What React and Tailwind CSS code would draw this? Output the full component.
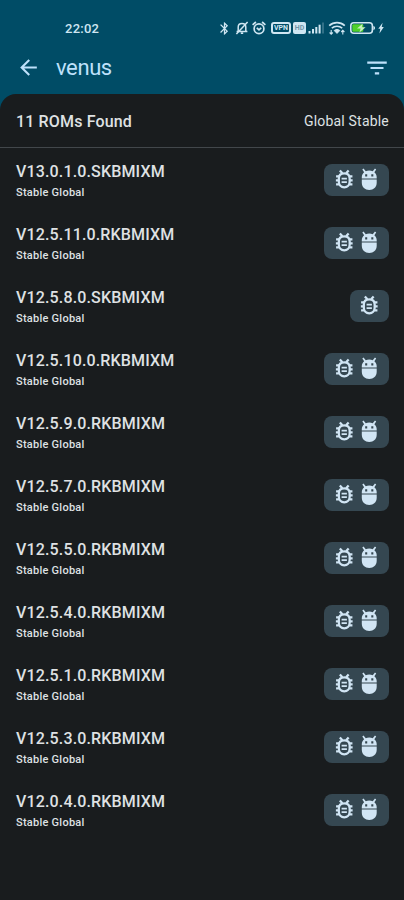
import React from "react";
import { MdArrowBack, MdBluetooth, MdFilterList } from "react-icons/md";

const roms = [
  { version: "V13.0.1.0.SKBMIXM", recovery: true },
  { version: "V12.5.11.0.RKBMIXM", recovery: true },
  { version: "V12.5.8.0.SKBMIXM", recovery: false },
  { version: "V12.5.10.0.RKBMIXM", recovery: true },
  { version: "V12.5.9.0.RKBMIXM", recovery: true },
  { version: "V12.5.7.0.RKBMIXM", recovery: true },
  { version: "V12.5.5.0.RKBMIXM", recovery: true },
  { version: "V12.5.4.0.RKBMIXM", recovery: true },
  { version: "V12.5.1.0.RKBMIXM", recovery: true },
  { version: "V12.5.3.0.RKBMIXM", recovery: true },
  { version: "V12.0.4.0.RKBMIXM", recovery: true },
];

const MutedBell = () => (
  <svg width="14" height="14" viewBox="0 0 14 14" fill="none" stroke="currentColor" strokeWidth="1.5" className="ml-[3px]">
    <path d="M3.2 10V6.2C3.2 4 4.8 2.6 7 2.6S10.8 4 10.8 6.2V10M1.6 10.4h10.8M5.8 12.3h2.4" />
    <path d="M1.4 13L12.6 1" />
  </svg>
);

const AlarmClock = () => (
  <svg width="14" height="14" viewBox="0 0 14 14" fill="none" stroke="currentColor" strokeWidth="1.7" className="ml-[3px]">
    <circle cx="7" cy="7.7" r="4.9" />
    <path d="M.6 3.9L3.9 1M13.4 3.9L10.1 1M4.8 6.8L7 8.8l2.2-2" />
  </svg>
);

const Signal = () => (
  <svg width="17" height="12" viewBox="0 0 17 12" fill="currentColor" className="ml-[2px]">
    <rect x="0.5" y="9" width="2" height="2.5" />
    <rect x="4" y="7" width="2" height="4.5" />
    <rect x="7.3" y="5" width="2" height="6.5" />
    <rect x="10.6" y="2.7" width="2" height="8.8" />
    <rect x="14.3" y="0.5" width="1.4" height="11" opacity="0.35" />
  </svg>
);

const Wifi = () => (
  <svg width="18" height="14" viewBox="0 0 18 14" fill="none" stroke="currentColor" strokeWidth="1.7" className="ml-[3px]">
    <path d="M1.2 4.7C5.8.6 12.2.6 16.8 4.7" />
    <path d="M3.8 7.2c3-2.6 7.4-2.6 10.4 0" />
    <path d="M6.2 9.5c1.6-1.4 4-1.4 5.6 0L9 12.4z" fill="currentColor" strokeWidth="1" />
    <path d="M3.2 9v4M1.6 11.5l1.6 1.6 1.6-1.6M14.8 13.4v-4M13.2 11l1.6-1.6 1.6 1.6" strokeWidth="1.1" />
  </svg>
);

const Battery = () => (
  <svg width="26" height="12" viewBox="0 0 26 12" className="ml-1">
    <rect x="0.8" y="0.8" width="21.6" height="10.4" rx="3" fill="none" stroke="currentColor" strokeWidth="1.6" />
    <rect x="2.3" y="2.3" width="11" height="7.4" rx="1" fill="#4fd02b" />
    <path d="M12.6 1.8L7 6.6h3.6l-1.2 3.8L15.6 5.2h-3.8z" fill="#c8f0c0" />
    <path d="M23.4 4v4c1.2-.4 1.6-1.1 1.6-2s-.4-1.6-1.6-2z" fill="currentColor" />
  </svg>
);

const Bolt = () => (
  <svg width="6" height="12" viewBox="0 0 6 12" fill="currentColor" className="ml-[2px]">
    <path d="M4.6.8L.3 6.8h2L1.4 11.4 5.8 5H3.7z" />
  </svg>
);

// outlined beetle with three pairs of legs and two stripes
const Bug = () => (
  <svg width="24.5" height="24.5" viewBox="0 0 24 24" fill="none" stroke="currentColor" strokeWidth="2.2">
    <path d="M12 6.3c-3.4 0-5.3 2.1-5.3 5v3.2c0 3.1 2.2 5.4 5.3 5.4s5.3-2.3 5.3-5.4v-3.2c0-2.9-1.9-5-5.3-5z" />
    <path d="M7.7 3.4l2.5 2.8M16.3 3.4l-2.5 2.8M4 9.1h3.6M3.8 13H7M4 16.9h3.6M20 9.1h-3.6M20.2 13H17M20 16.9h-3.6" />
    <path d="M9.4 11.4h5.2M9.4 14.8h5.2" strokeWidth="1.8" />
  </svg>
);

// robot head over a rounded body
const Robot = () => (
  <svg width="24.5" height="24.5" viewBox="0 0 24 24" fill="currentColor">
    <path d="M4.7 12.2v3.2c0 4.2 3.1 7.1 7.3 7.1s7.3-2.9 7.3-7.1v-3.2z" />
    <path
      fillRule="evenodd"
      d="M4.7 11.3V10c0-1.9.9-3.6 2.3-4.8L5.2 2.5l1.2-1 2.2 2.7C9.6 3.7 10.8 3.4 12 3.4s2.4.3 3.4.8l2.2-2.7 1.2 1L17 5.2c1.400 1.200 2.300 2.900 2.300 4.800v1.300zM8 7.200h2v2H8zM14 7.200h2v2h-2z"
    />
  </svg>
);

const StatusBar = () => (
  <div className="flex h-[44px] items-end justify-between pl-[65px] pr-[20px] text-[#cfe6f2]">
    <span className="h-[24px] text-[13px] font-medium leading-[18px] tracking-[0.25px]">22:02</span>
    <div className="mb-[9px] flex h-[14px] items-center">
      <MdBluetooth className="h-[15px] w-[15px]" />
      <MutedBell />
      <AlarmClock />
      <span className="ml-[5px] flex h-[12px] w-[20px] items-center justify-center rounded-[3px] border-2 border-current text-[7px] font-bold leading-none">
        VPN
      </span>
      <span className="ml-[2px] flex h-[12px] w-[13px] items-center justify-center rounded-[2px] bg-[#cfe6f2] text-[7px] font-bold leading-none text-[#6f95a8]">
        HD
      </span>
      <Signal />
      <Wifi />
      <Battery />
      <Bolt />
    </div>
  </div>
);

const RomRow = ({ version, recovery }) => (
  <li className="flex h-[63px] items-center justify-between pl-4 pr-[15px]">
    <div className="pt-1">
      <h2 className="text-[16px] font-medium leading-[22px] tracking-[0.15px]">{version}</h2>
      <p className="text-[11px] font-medium leading-5 tracking-[0.25px]">Stable Global</p>
    </div>
    <div className="flex h-8 items-center gap-[1px] rounded-lg bg-[#354751] px-[7.5px] text-[#d1e5f4]">
      <Bug />
      {recovery && <Robot />}
    </div>
  </li>
);

const App = () => {
  return (
    <div className="flex h-[900px] w-[404px] flex-col overflow-hidden bg-[#004c66] font-['Roboto',sans-serif] text-[#dfe1e3]">
      <StatusBar />
      <header className="flex h-[50px] items-center pl-4 pr-[14px] pb-[3px] text-[#bee1fb]">
        <MdArrowBack className="h-[25px] w-[25px]" />
        <h1 className="ml-[15px] flex-1 pt-[1px] text-[22px] leading-none tracking-[-0.4px]">venus</h1>
        <MdFilterList className="h-[26px] w-[26px]" />
      </header>

      <main className="flex-1 rounded-t-[16px] bg-[#191c1e]">
        <div className="flex h-[54px] items-center justify-between border-b border-[#42474b] pl-4 pr-[15px] pt-[2px]">
          <span className="text-[16px] font-medium tracking-[0.15px]">11 ROMs Found</span>
          <span className="text-[14px] tracking-[0.2px]">Global Stable</span>
        </div>
        <ul>
          {roms.map((rom) => (
            <RomRow key={rom.version} {...rom} />
          ))}
        </ul>
      </main>
    </div>
  );
};

export default App;
